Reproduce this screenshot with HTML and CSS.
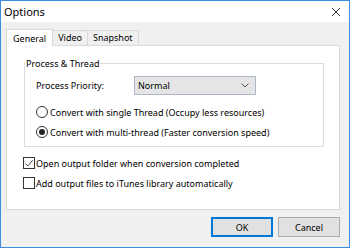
FILE: index.html
```html
<!DOCTYPE html>
<html lang="en">
<head>
    <meta charset="UTF-8">
    <title>Options</title>
    <link rel="stylesheet" href="styles.css">
</head>
<body>
    <div class="window">
        <!-- Title bar -->
        <div class="titlebar">
            <span class="title">Options</span>
            <svg class="close" width="10" height="10" viewBox="0 0 10 10">
                <path d="M1 1 L9 9 M9 1 L1 9" stroke="#333" stroke-width="1" fill="none"/>
            </svg>
        </div>

        <div class="client">
            <!-- Tabs -->
            <div class="tabs">
                <div class="tab active">General</div>
                <div class="tab">Video</div>
                <div class="tab">Snapshot</div>
            </div>

            <div class="panel">
                <fieldset class="group">
                    <legend>Process &amp; Thread</legend>
                    <div class="row priority">
                        <span class="label">Process Priority:</span>
                        <div class="combo">
                            <span>Normal</span>
                            <svg width="8" height="5" viewBox="0 0 8 5">
                                <path d="M0.5 0.5 L4 4 L7.5 0.5" stroke="#555" stroke-width="1" fill="none"/>
                            </svg>
                        </div>
                    </div>
                    <div class="row option">
                        <span class="radio"></span>
                        <span>Convert with single Thread (Occupy less resources)</span>
                    </div>
                    <div class="row option">
                        <span class="radio checked"></span>
                        <span>Convert with multi-thread (Faster conversion speed)</span>
                    </div>
                </fieldset>

                <div class="row check">
                    <span class="box">
                        <svg width="11" height="11" viewBox="0 0 11 11">
                            <path d="M1.5 5.5 L4.2 8.3 L9.5 2" stroke="#333" stroke-width="1" fill="none"/>
                        </svg>
                    </span>
                    <span>Open output folder when conversion completed</span>
                </div>
                <div class="row check">
                    <span class="box"></span>
                    <span>Add output files to iTunes library automatically</span>
                </div>
            </div>

            <div class="buttons">
                <button class="btn default">OK</button>
                <button class="btn">Cancel</button>
            </div>
        </div>
    </div>
</body>
</html>
```

FILE: styles.css
```css
body {
    margin: 0;
    padding: 0;
    font-family: "Noto Sans", "Liberation Sans", sans-serif;
    font-size: 9px;
    color: #000;
    background: #fff;
}

.window {
    width: 350px;
    height: 248px;
    box-sizing: border-box;
    border: 1px solid #3a8ee0;
    display: flex;
    flex-direction: column;
    background: #f0f0f0;
}

.titlebar {
    height: 21px;
    background: #fff;
    display: flex;
    align-items: center;
    justify-content: space-between;
    padding: 0 8px 0 3px;
}

.title {
    font-size: 11px;
}

.client {
    flex: 1;
    padding: 6px 9px 0 5px;
    display: flex;
    flex-direction: column;
}

.tabs {
    display: flex;
    align-items: flex-end;
    height: 17px;
}

.tab {
    height: 14px;
    line-height: 14px;
    padding: 0 5px;
    border: 1px solid #d9d9d9;
    border-bottom: none;
    background: #f0f0f0;
    box-sizing: content-box;
    margin-left: -1px;
}

.tab.active {
    height: 16px;
    line-height: 17px;
    background: #fff;
    margin-left: 0;
    padding: 0 6px;
    position: relative;
    z-index: 1;
    margin-bottom: -1px;
}

.panel {
    height: 165px;
    background: #fff;
    border: 1px solid #d9d9d9;
    padding: 11px 0 0 17px;
    box-sizing: border-box;
}

.group {
    width: 300px;
    height: 90px;
    box-sizing: border-box;
    margin: 0;
    padding: 0 0 0 11px;
    border: 1px solid #dcdcdc;
}

.group legend {
    padding: 0 1px;
    margin-left: -11px;
}

.row {
    display: flex;
    align-items: center;
}

.priority {
    margin-top: 6px;
    height: 19px;
}

.priority .label {
    width: 98px;
}

.combo {
    width: 122px;
    height: 19px;
    box-sizing: border-box;
    border: 1px solid #adb8c6;
    background: #e5e5e5;
    display: flex;
    align-items: center;
    justify-content: space-between;
    padding: 0 6px 0 3px;
}

.option {
    height: 20px;
}

.priority + .option {
    margin-top: 7px;
}

.radio {
    width: 12px;
    height: 12px;
    box-sizing: border-box;
    border: 1px solid #333;
    border-radius: 50%;
    margin-right: 2px;
    display: flex;
    align-items: center;
    justify-content: center;
}

.radio.checked::after {
    content: "";
    width: 6px;
    height: 6px;
    border-radius: 50%;
    background: #222;
}

.check {
    height: 20px;
    margin-left: -1px;
}

.group + .check {
    margin-top: 6px;
}

.box {
    width: 12px;
    height: 12px;
    box-sizing: border-box;
    border: 1px solid #333;
    margin-right: 1px;
    display: flex;
    align-items: center;
    justify-content: center;
}

.buttons {
    display: flex;
    justify-content: flex-end;
    gap: 5px;
    margin-top: 7px;
}

.btn {
    width: 62px;
    height: 20px;
    font-family: inherit;
    font-size: 9px;
    background: #e1e1e1;
    border: 1px solid #adadad;
    padding: 0;
}

.btn.default {
    border: 2px solid #0078d7;
}
```
